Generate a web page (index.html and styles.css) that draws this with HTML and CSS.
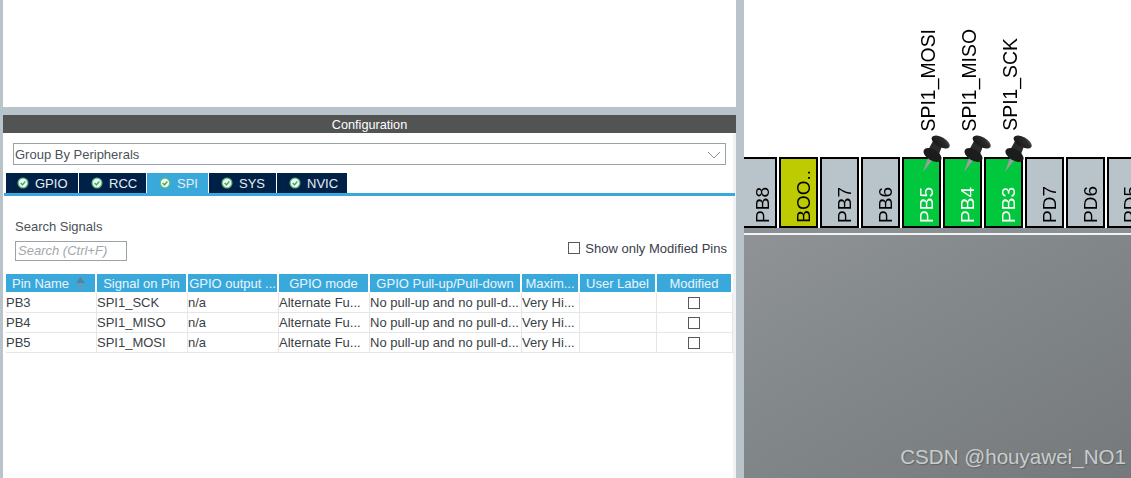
FILE: index.html
```html
<!DOCTYPE html>
<html lang="en">
<head>
<meta charset="utf-8">
<title>Pinout configuration</title>
<link rel="stylesheet" href="styles.css">
</head>
<body>
<svg class="defs" width="0" height="0" aria-hidden="true">
  <defs>
    <symbol id="check" viewBox="0 0 12 12">
      <circle cx="6" cy="6" r="5.500" fill="#5dbb7c"/>
      <circle cx="6" cy="6" r="4.200" fill="#f2f8f4"/>
      <path d="M3.600 6l1.800 1.800 3-3.200" fill="none" stroke="#4aa96c" stroke-width="1.500"/>
    </symbol>
    <linearGradient id="tackGrad" x1="0" y1="1" x2="1" y2="0">
      <stop offset="0" stop-color="#141414"/>
      <stop offset=".7" stop-color="#2c2c2c"/>
      <stop offset="1" stop-color="#6a6a6a"/>
    </linearGradient>
    <filter id="soft" x="-20%" y="-20%" width="140%" height="140%"><feGaussianBlur stdDeviation=".4"/></filter>
    <symbol id="tack" viewBox="0 0 30 38">
      <g filter="url(#soft)">
        <path d="M1 37L6 23l4.500 2z" fill="#9a9e9f"/>
        <path d="M11 6l9 5-4 11-11-5z" fill="#2a2a2a"/>
        <ellipse cx="10.500" cy="20" rx="10" ry="5.500" transform="rotate(30 10.500 20)" fill="#1e1e1e"/>
        <ellipse cx="18.700" cy="7" rx="10" ry="5" transform="rotate(30 18.700 7)" fill="url(#tackGrad)"/>
      </g>
    </symbol>
  </defs>
</svg>
<main class="app">
  <section class="left">
    <div class="top-blank"></div>
    <div class="sash"></div>
    <h2 class="title">Configuration</h2>
    <div class="config">
      <div class="select"><span>Group By Peripherals</span>
        <svg class="chev" width="14" height="8" viewBox="0 0 14 8"><path d="M1 1l6 6 6-6" fill="none" stroke="#8a9094" stroke-width="1"/></svg>
      </div>
      <div class="tabs">
        <div class="tab t1"><svg class="chk"><use href="#check"/></svg>GPIO</div>
        <div class="tab t2"><svg class="chk"><use href="#check"/></svg>RCC</div>
        <div class="tab t3 active"><svg class="chk"><use href="#check"/></svg>SPI</div>
        <div class="tab t4"><svg class="chk"><use href="#check"/></svg>SYS</div>
        <div class="tab t5"><svg class="chk"><use href="#check"/></svg>NVIC</div>
      </div>
      <div class="search-row">
        <div class="search-col">
          <div class="search-label">Search Signals</div>
          <div class="search-input">Search (Ctrl+F)</div>
        </div>
        <label class="only"><span class="box"></span>Show only Modified Pins</label>
      </div>
      <table class="grid">
        <colgroup>
          <col class="c1"><col class="c2"><col class="c3"><col class="c4"><col class="c5"><col class="c6"><col class="c7"><col class="c8">
        </colgroup>
        <thead>
          <tr>
            <th class="first">Pin Name<svg class="sort" width="9" height="14" viewBox="0 0 9 14"><path d="M4.500 0L9 6H0z" fill="#5f7f92"/><path d="M0 8h9l-4.500 6z" fill="#5d9cc0"/></svg></th>
            <th>Signal on Pin</th><th>GPIO output ...</th><th>GPIO mode</th><th>GPIO Pull-up/Pull-down</th><th>Maxim...</th><th>User Label</th><th>Modified</th>
          </tr>
        </thead>
        <tbody>
          <tr><td>PB3</td><td>SPI1_SCK</td><td>n/a</td><td>Alternate Fu...</td><td>No pull-up and no pull-d...</td><td>Very Hi...</td><td></td><td class="mid"><span class="box"></span></td></tr>
          <tr><td>PB4</td><td>SPI1_MISO</td><td>n/a</td><td>Alternate Fu...</td><td>No pull-up and no pull-d...</td><td>Very Hi...</td><td></td><td class="mid"><span class="box"></span></td></tr>
          <tr><td>PB5</td><td>SPI1_MOSI</td><td>n/a</td><td>Alternate Fu...</td><td>No pull-up and no pull-d...</td><td>Very Hi...</td><td></td><td class="mid"><span class="box"></span></td></tr>
        </tbody>
      </table>
    </div>
  </section>
  <div class="divider"></div>
  <section class="chip">
    <div class="pins">
      <div class="pin"><span class="name">PB8</span></div>
      <div class="pin boot"><span class="name">BOO..</span></div>
      <div class="pin"><span class="name">PB7</span></div>
      <div class="pin"><span class="name">PB6</span></div>
      <div class="pin on"><span class="signal">SPI1_MOSI</span><span class="name">PB5</span><svg class="tack"><use href="#tack"/></svg></div>
      <div class="pin on"><span class="signal">SPI1_MISO</span><span class="name">PB4</span><svg class="tack"><use href="#tack"/></svg></div>
      <div class="pin on"><span class="signal">SPI1_SCK</span><span class="name">PB3</span><svg class="tack"><use href="#tack"/></svg></div>
      <div class="pin"><span class="name">PD7</span></div>
      <div class="pin"><span class="name">PD6</span></div>
      <div class="pin"><span class="name">PD5</span></div>
    </div>
    <div class="band"></div>
    <div class="body"><span class="mark">CSDN @houyawei_NO1</span></div>
  </section>
</main>
</body>
</html>
```
FILE: styles.css
```css
* { box-sizing: border-box; }
html, body { margin: 0; height: 100%; }
body { font-family: "Liberation Sans", Arial, sans-serif; font-size: 13px; color: #39404a; overflow: hidden; background: #fff; }
.defs { position: absolute; }
.app { display: flex; width: 1131px; height: 478px; overflow: hidden; }

.left { width: 736px; flex: none; display: flex; flex-direction: column; border-left: 3px solid #b9c4ca; }
.top-blank { height: 107px; background: #fff; }
.sash { height: 8px; background: #b9c4ca; }
.title { margin: 0; height: 18px; line-height: 20px; background: #525454; color: #fff; font-size: 12.700px; font-weight: normal; text-align: center; }
.config { flex: 1; padding-top: 10px; background: #fff; border-right: 3px solid #f1f2f3; }

.select { margin-left: 10px; width: 713px; height: 22px; border: 1px solid #9aa3a8; display: flex; align-items: center; justify-content: space-between; padding: 1px 4px 0 1px; color: #4b5258; }
.chev { display: block; }

.tabs { display: flex; height: 23px; margin: 8px -2px 0 1px; padding-left: 2px; border-bottom: 3px solid #39a9dc; }
.tab { height: 20px; background: #002147; color: #e8edf2; display: flex; align-items: center; gap: 6px; border-right: 1px solid #fff; }
.t1 { width: 73px; padding-left: 11px; }
.t2 { width: 68px; padding-left: 12px; }
.t3 { width: 62px; padding-left: 12px; }
.t4 { width: 68px; padding-left: 12px; }
.t5 { width: 70px; padding-left: 12px; border-right: 0; }
.tab.active { background: #39a9dc; }
.chk { width: 12px; height: 12px; flex: none; }

.search-row { display: flex; justify-content: space-between; align-items: flex-end; padding: 23px 6px 0 12px; }
.search-label { height: 15px; line-height: 15px; color: #4b5258; }
.search-input { margin-top: 7px; width: 112px; height: 20px; border: 1px solid #9aa3a8; padding-left: 2px; line-height: 18px; font-style: italic; color: #a4a8ab; }
.only { display: flex; align-items: center; gap: 5px; height: 14px; margin-bottom: 6px; color: #39404a; }
.box { display: inline-block; width: 12px; height: 12px; border: 1px solid #55595c; background: #fff; }

.grid { margin: 13px 0 0 3px; width: 727px; table-layout: fixed; border-collapse: separate; border-spacing: 0; }
.c1 { width: 91px; } .c2 { width: 91px; } .c3 { width: 91px; } .c4 { width: 91px; }
.c5 { width: 152px; } .c6 { width: 58px; } .c7 { width: 77px; } .c8 { width: 76px; }
.grid th { height: 19px; padding: 1px 0 0; background: #39a9dc; color: #e9f5fb; font-weight: normal; text-align: center; white-space: nowrap; border-right: 2px solid #fff; border-bottom: 1px solid #fff; overflow: hidden; }
.grid th.first { text-align: left; padding-left: 6px; }
.sort { margin-left: 7px; vertical-align: -3px; }
.grid td { height: 20px; padding: 0; white-space: nowrap; border-right: 1px solid #e4e6e8; border-bottom: 1px solid #e4e6e8; color: #3a3f46; overflow: hidden; }
.grid td.mid { text-align: center; }
.grid td .box { vertical-align: -2px; margin-right: 2px; }

.divider { width: 8px; flex: none; background: #b9c4ca; }

.chip { flex: 1; min-width: 0; display: flex; flex-direction: column; overflow: hidden; background: #fff; }
.pins { display: flex; gap: 2px; margin: 157px 0 0 -5.500px; height: 71px; flex: none; }
.pin { position: relative; width: 38.900px; height: 71px; flex: none; background: #b9c4ca; border: 2px solid #000; display: flex; align-items: flex-end; justify-content: center; padding: 0 0 3px 11px; color: #000; }
.pin.on { background: #00c73c; color: #fff; }
.pin.boot { background: #bdcb00; }
.name { writing-mode: vertical-rl; transform: rotate(180deg); font-size: 19px; line-height: 18px; white-space: nowrap; }
.signal { position: absolute; left: 15px; bottom: 95px; writing-mode: vertical-rl; transform: rotate(180deg); font-size: 19.400px; line-height: 18px; color: #000; white-space: nowrap; }
.tack { position: absolute; left: 18px; top: -24px; width: 30px; height: 38px; }

.band { height: 5px; flex: none; background: #8b9094; }
.body { flex: 1; border-top: 2px solid #f2f3f3; background: linear-gradient(150deg, #8f9396 0%, #83888b 40%, #75797c 100%); display: flex; align-items: flex-end; justify-content: flex-end; padding: 0 5px 9px 0; }
.mark { font-size: 20.600px; line-height: 24px; color: #c9cccd; text-shadow: 1px 1px 1px #5f6467; }
```
